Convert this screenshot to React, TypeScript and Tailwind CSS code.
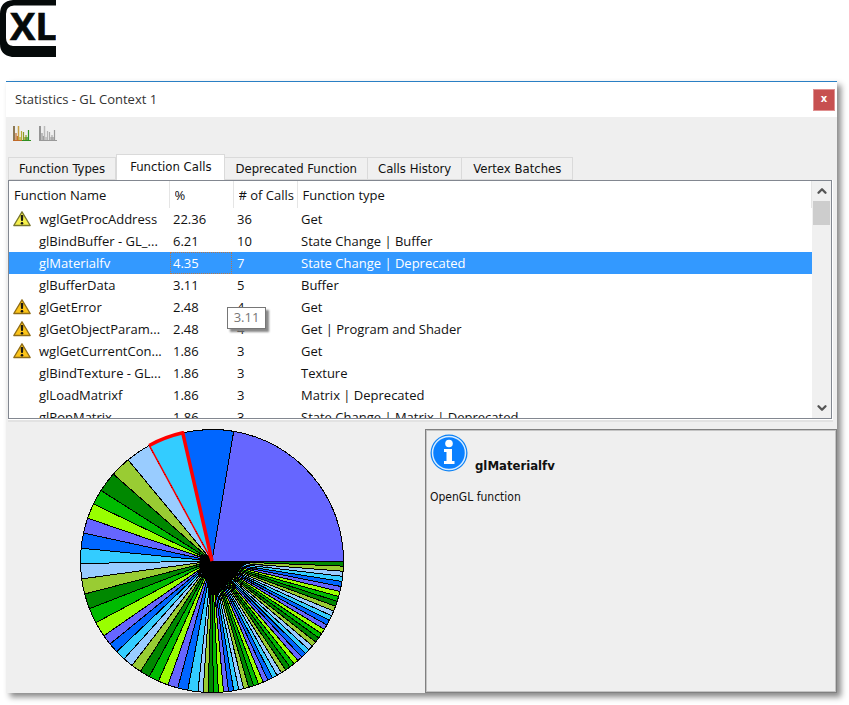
import { useState } from "react";
import { ChevronDown, ChevronUp } from "lucide-react";

type FunctionRow = {
  name: string;
  percent: string;
  calls: number;
  type: string;
  warning?: "light" | "dark";
};

const ROWS: FunctionRow[] = [
  { name: "wglGetProcAddress", percent: "22.36", calls: 36, type: "Get", warning: "light" },
  { name: "glBindBuffer - GL_...", percent: "6.21", calls: 10, type: "State Change | Buffer" },
  { name: "glMaterialfv", percent: "4.35", calls: 7, type: "State Change | Deprecated" },
  { name: "glBufferData", percent: "3.11", calls: 5, type: "Buffer" },
  { name: "glGetError", percent: "2.48", calls: 4, type: "Get", warning: "dark" },
  { name: "glGetObjectParam...", percent: "2.48", calls: 4, type: "Get | Program and Shader", warning: "dark" },
  { name: "wglGetCurrentCon...", percent: "1.86", calls: 3, type: "Get", warning: "dark" },
  { name: "glBindTexture - GL...", percent: "1.86", calls: 3, type: "Texture" },
  { name: "glLoadMatrixf", percent: "1.86", calls: 3, type: "Matrix | Deprecated" },
  { name: "glPopMatrix", percent: "1.86", calls: 3, type: "State Change | Matrix | Deprecated" },
];

const TABS = [
  "Function Types",
  "Function Calls",
  "Deprecated Function",
  "Calls History",
  "Vertex Batches",
];

// Call counts for every function, largest first
const SLICES = [
  36, 10, 7, 5, 4, 4,
  ...Array<number>(10).fill(3),
  ...Array<number>(11).fill(2),
  ...Array<number>(43).fill(1),
];

const COLORS = [
  "#6666ff",
  "#0066ff",
  "#33ccff",
  "#99ccff",
  "#99cc33",
  "#008800",
  "#00bb00",
  "#99ff00",
];

const CENTER = 132;
const RADIUS = 131.5;

function pointAt(angle: number) {
  return `${(CENTER + RADIUS * Math.cos(angle)).toFixed(2)} ${(CENTER - RADIUS * Math.sin(angle)).toFixed(2)}`;
}

function PieChart({ selected }: { selected: number }) {
  const total = SLICES.reduce((sum, n) => sum + n, 0);
  let angle = 0;
  const slices = SLICES.map((count, i) => {
    const start = angle;
    angle += (count / total) * Math.PI * 2;
    return { from: pointAt(start), to: pointAt(angle), color: COLORS[i % COLORS.length] };
  });
  const active = slices[selected];

  return (
    <svg width="264" height="264" viewBox="0 0 264 264" role="img" aria-label="Function calls" className="block">
      <g stroke="#000" strokeWidth="1" shapeRendering="crispEdges">
        {slices.map((s, i) => (
          <path key={i} d={`M132 132L${s.from}A131.5 131.5 0 0 0 ${s.to}Z`} fill={s.color} />
        ))}
      </g>
      {/* the outlines of the thin slices run together here */}
      <path d="M120 127L126 125L132 132L165 132L163 137L158 143L160 146L152 149L146 157L140 160L136 166L129 166L127 151L122 146L119 138Z" />
      <g fill="none" stroke="#000" strokeWidth="1">
        <path d="M160 145Q163 136 174 135L188 137M158 149Q166 138 178 140M150 155Q160 148 170 149M145 160Q152 154 158 160M138 168Q143 162 148 168M136 178Q139 165 145 170" />
      </g>
      <path d={`M132 132L${active.to}`} stroke="#f00" strokeWidth="1.5" />
      <path
        d={`M132 132L${active.from}A131.5 131.5 0 0 0 ${active.to}`}
        fill="none"
        stroke="#f00"
        strokeWidth="3.5"
        strokeLinejoin="round"
      />
    </svg>
  );
}

function Logo() {
  return (
    <svg width="56" height="57" viewBox="0 0 56 57" role="img" aria-label="XL" className="block">
      <path
        d="M56 0H13Q0 1 0 14V44Q0 55 12 57H56V46H13Q6 45 6 38V14Q6 6 14 5.500H56Z"
        fill="#050a0a"
      />
      <text
        x="10"
        y="40"
        fontFamily="'Open Sans', sans-serif"
        fontWeight="700"
        fontSize="38"
        fill="#050a0a"
        stroke="#050a0a"
        strokeWidth="0.6"
      >
        XL
      </text>
    </svg>
  );
}

function StatsIcon({ muted = false }: { muted?: boolean }) {
  const c = muted
    ? ["#777", "#999", "#bbb", "#b5b5b5", "#aaa", "#999"]
    : ["#6b5020", "#c06a28", "#c8a040", "#b5ab30", "#8c9c28", "#309020"];
  return (
    <svg width="18" height="16" viewBox="0 0 18 16" className="block">
      <path d="M1 0V15" stroke={c[0]} strokeWidth="1.500" />
      <path d="M3 7V14M4.500 10V14" stroke={c[1]} strokeWidth="1.200" />
      <path d="M5.500 0V14" stroke={c[2]} strokeWidth="1.500" />
      <path d="M8.500 5V14M7 11V14" stroke={c[3]} strokeWidth="1.200" />
      <path d="M10.500 6V14M13 9V14M12 11V14" stroke={c[4]} strokeWidth="1.200" />
      <path d="M15.500 4V14M14 11V14" stroke={c[5]} strokeWidth="1.200" />
      <path d="M0 14.500H9" stroke={c[1]} />
      <path d="M9 14.500H18" stroke={c[5]} />
    </svg>
  );
}

function WarningIcon({ tone }: { tone: "light" | "dark" }) {
  return (
    <svg width="18" height="16" viewBox="0 0 18 16" className="block shrink-0" aria-label="Warning">
      <path
        d="M9 0.800L17.200 14.500H0.800Z"
        fill={tone === "light" ? "#f6f04c" : "#fcc419"}
        stroke={tone === "light" ? "#77752c" : "#8f6c17"}
        strokeWidth="1.300"
        strokeLinejoin="round"
      />
      <path d="M8.200 4.500H9.800L9.500 9.500H8.500Z" fill="#111" stroke="#111" strokeWidth="1" />
      <circle cx="9" cy="12.300" r="1.300" fill="#111" />
    </svg>
  );
}

function InfoIcon() {
  return (
    <svg width="38" height="38" viewBox="0 0 38 38" className="block shrink-0">
      <circle cx="19" cy="19" r="18.500" fill="#0a80f5" />
      <circle cx="19" cy="19" r="16.500" fill="#0a80ff" stroke="#d8ecff" strokeWidth="1.500" />
      <circle cx="19" cy="9.500" r="3.800" fill="#fff" />
      <path d="M14 15H22V27H24.500V30H14V27H16.500V18H14Z" fill="#fff" />
    </svg>
  );
}

export default function App() {
  const [tab, setTab] = useState("Function Calls");
  const [selected, setSelected] = useState(2);

  return (
    <div className="bg-white pb-3 font-['Open_Sans',sans-serif] text-[13px] text-[#111]">
      <Logo />

      <main className="mt-6 mr-3 ml-[6px] bg-[#efefef] shadow-[4px_4px_6px_#888]">
        {/* Title bar */}
        <header className="flex h-9 items-center justify-between border-t border-[#2a7fc4] bg-white pr-[2px] pl-[9px]">
          <h1 className="text-[#333]">Statistics - GL Context 1</h1>
          <button
            aria-label="Close"
            className="flex h-[22px] w-[22px] items-center justify-center border border-[#e09090] bg-[#c75050] pb-[2px] font-['DejaVu_Sans',sans-serif] text-[10px] font-bold text-white"
          >
            x
          </button>
        </header>

        {/* Toolbar */}
        <div className="flex h-[37px] items-center gap-2 px-[7px] pb-1">
          <button aria-label="Show statistics">
            <StatsIcon />
          </button>
          <button aria-label="Clear statistics">
            <StatsIcon muted />
          </button>
        </div>

        {/* Tabs */}
        <div
          role="tablist"
          className="flex h-[26px] items-end pl-[2px] font-['DejaVu_Sans_Condensed','DejaVu_Sans',sans-serif] text-[13px]"
        >
          {TABS.map((label) => (
            <button
              key={label}
              role="tab"
              aria-selected={tab === label}
              onClick={() => setTab(label)}
              className={
                tab === label
                  ? "h-[26px] border border-b-0 border-[#dadada] bg-white px-[13px] pb-[2px] whitespace-nowrap"
                  : "h-[23px] border border-l-0 border-[#dadada] bg-[#f0f0f0] px-[10px] whitespace-nowrap first:border-l last:px-[11px]"
              }
            >
              {label}
            </button>
          ))}
        </div>

        {/* Function list */}
        <div className="mr-1 ml-[2px] border-b-2 border-[#e2e2e2] bg-white pb-[1px]">
          <div className="relative mr-[1px] flex h-[239px] border border-[#828790] bg-white">
            <div className="min-w-0 flex-1 overflow-hidden">
              <table className="w-full table-fixed border-collapse text-left leading-5">
                <colgroup>
                  <col className="w-[160px]" />
                  <col className="w-[64px]" />
                  <col className="w-[64px]" />
                  <col />
                </colgroup>
                <thead>
                  <tr className="h-[27px]">
                    {["Function Name", "%", "# of Calls", "Function type"].map((h) => (
                      <th
                        key={h}
                        className="border-r border-[#e5e5e5] p-0 pr-[3px] pl-[5px] font-normal whitespace-nowrap"
                      >
                        <div className="overflow-hidden">{h}</div>
                      </th>
                    ))}
                  </tr>
                </thead>
                <tbody>
                  {ROWS.map((row, i) => (
                    <tr
                      key={row.name}
                      onClick={() => setSelected(i)}
                      className={i === selected ? "h-[22px] bg-[#3399ff] text-white" : "h-[22px]"}
                    >
                      <td className="p-0 pl-1 whitespace-nowrap">
                        <div className="flex items-center gap-2">
                          {row.warning ? <WarningIcon tone={row.warning} /> : <span className="w-[18px]" />}
                          {row.name}
                        </div>
                      </td>
                      <td className="p-0">
                        <div
                          className={
                            i === selected
                              ? "mx-[1px] border border-dotted border-[#b07850] pl-[2px]"
                              : "pl-1"
                          }
                        >
                          {row.percent}
                        </div>
                      </td>
                      <td className="p-0 pl-1">{row.calls}</td>
                      <td className="p-0 pl-1 whitespace-nowrap">{row.type}</td>
                    </tr>
                  ))}
                </tbody>
              </table>
            </div>

            {/* Scroll bar */}
            <div className="flex w-[19px] flex-col items-center bg-[#f0f0f0]">
              <button aria-label="Scroll up" className="flex h-5 w-full items-center justify-center text-[#555]">
                <ChevronUp size={14} strokeWidth={4} />
              </button>
              <div className="h-6 w-[17px] bg-[#cdcdcd]" />
              <button
                aria-label="Scroll down"
                className="mt-auto flex h-5 w-full items-center justify-center text-[#555]"
              >
                <ChevronDown size={14} strokeWidth={4} />
              </button>
            </div>

            <div
              role="tooltip"
              className="absolute top-[126px] left-[218px] flex h-[22px] w-[39px] items-center justify-center border border-[#767676] bg-white text-[#777] shadow-[3px_3px_2px_#888]"
            >
              3.11
            </div>
          </div>
        </div>

        {/* Chart and details */}
        <div className="mt-[7px] grid grid-cols-[419fr_412fr]">
          <div className="flex justify-center pr-[7px]">
            <PieChart selected={selected} />
          </div>
          <section className="border border-[#808080] px-1 pt-1 font-['DejaVu_Sans_Condensed','DejaVu_Sans',sans-serif] text-[12px] shadow-[inset_0_0_0_1px_#c4c4c4]">
            <div className="flex items-end gap-[7px]">
              <InfoIcon />
              <h2 className="text-[13px] leading-3 font-bold">{ROWS[selected].name}</h2>
            </div>
            <p className="mt-4">OpenGL function</p>
          </section>
        </div>
      </main>
    </div>
  );
}
